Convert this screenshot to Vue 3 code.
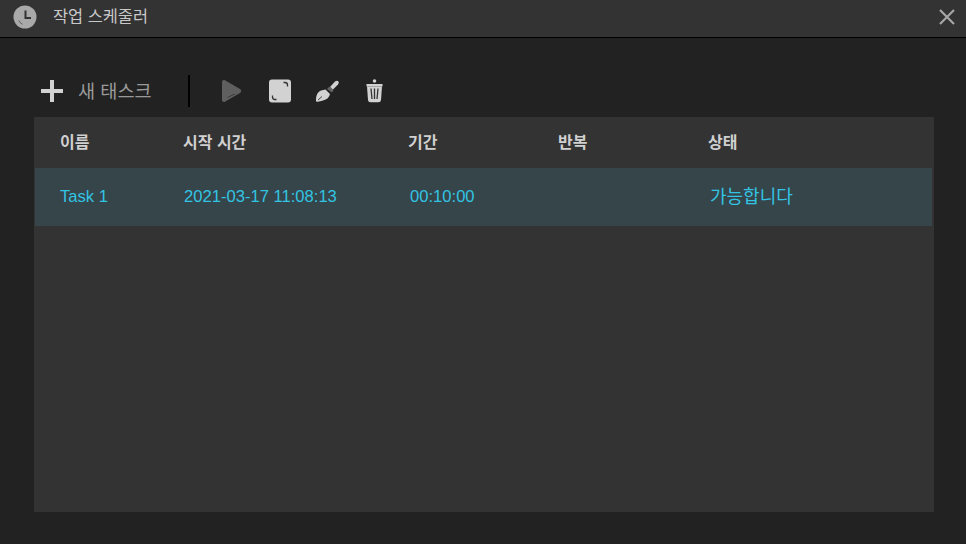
<template>
  <div class="window">
    <div class="title-bar">
      <svg class="app-icon" width="24" height="24" viewBox="0 0 24 24">
        <circle cx="12" cy="12" r="11.5" fill="#a9a9a9" />
        <path d="M12.5 5.5V13H18" fill="none" stroke="#333" stroke-width="2" />
        <path d="M6 15.5C6.6 17.2 7.6 18.3 9.5 19.2" fill="none" stroke="#555" stroke-width="1" />
      </svg>
      <span class="title">작업 스케줄러</span>
      <button class="close-btn">
        <svg width="16" height="16" viewBox="0 0 16 16">
          <path d="M1 1L15 15M15 1L1 15" stroke="#a6a6a6" stroke-width="2.2" />
        </svg>
      </button>
    </div>

    <div class="content">
      <div class="toolbar">
        <button class="add-btn">
          <svg width="24" height="24" viewBox="0 0 24 24">
            <path d="M12 1V23M1 12H23" stroke="#d2d2d2" stroke-width="4" />
          </svg>
          <span>새 태스크</span>
        </button>
        <div class="divider"></div>
        <div class="tools">
          <svg width="22" height="24" viewBox="1.5 0 22 24">
            <path d="M1.5 3Q1.5 0.5 4 1L19.5 10Q22 12 19.5 14L4 23Q1.5 23.5 1.5 21Z" fill="#5f5f5f" />
            <path d="M7 18.5L14 15" stroke="#3a3a3a" stroke-width="1" />
          </svg>
          <svg width="22" height="24" viewBox="0 0 22 24">
            <rect x="0" y="0.5" width="22" height="23" rx="3" fill="#d2d2d2" />
            <path d="M14.5 3.5H16Q18.5 3.5 18.5 6V7.5M3.5 16.5V18Q3.5 20.5 6 20.5H7.5" fill="none" stroke="#333" stroke-width="1.3" />
          </svg>
          <svg width="24" height="24" viewBox="1 0 24 24">
            <path d="M15 8L20 2.5Q22 1 23.3 2.2Q24.5 3.5 23 5.5L17.5 11Z" fill="#d2d2d2" />
            <path d="M13.5 8.5L15 7.5L18.5 11L17 13.5L12 10Z" fill="#666" />
            <path d="M1 22.5Q0.5 14 6 11.5L10.5 10.5L15 15Q14 20 8 21.5Q4 23 1 22.5Z" fill="#d2d2d2" />
            <path d="M3 21L7 17.5" stroke="#444" stroke-width="1" />
          </svg>
          <svg width="20" height="24" viewBox="0 0 20 24">
            <circle cx="9.5" cy="2" r="1.8" fill="#d2d2d2" />
            <path d="M1.5 5H17.5V7.5H1.5Z" fill="#d2d2d2" />
            <path d="M2 7.5H17L16 21Q15.8 23.2 13.5 23.2H5.5Q3.2 23.2 3 21Z" fill="#d2d2d2" />
            <path d="M6 9.5L7 20M9.5 9.5V20M13 9.5L12 20" stroke="#333" stroke-width="1.3" />
          </svg>
        </div>
      </div>

      <div class="table">
        <div class="row head">
          <span v-for="col in columns" :key="col">{{ col }}</span>
        </div>
        <div v-for="task in tasks" :key="task.name" class="row task">
          <span>{{ task.name }}</span>
          <span class="start">{{ task.start }}</span>
          <span class="duration">{{ task.duration }}</span>
          <span>{{ task.repeat }}</span>
          <span class="status">{{ task.status }}</span>
        </div>
      </div>
    </div>
  </div>
</template>

<script setup>
const columns = ['이름', '시작 시간', '기간', '반복', '상태']

const tasks = [
  { name: 'Task 1', start: '2021-03-17 11:08:13', duration: '00:10:00', repeat: '', status: '가능합니다' }
]
</script>

<style scoped>
.window {
  width: 966px;
  height: 544px;
  background: #222222;
  display: flex;
  flex-direction: column;
  font-family: "Liberation Sans", "Noto Sans CJK KR", sans-serif;
  overflow: hidden;
}

.title-bar {
  height: 38px;
  flex: none;
  display: flex;
  align-items: center;
  padding: 0 11px 3px 13px;
  box-sizing: border-box;
  background: #333333;
  border-bottom: 1px solid #000;
}

.title {
  margin-left: 16px;
  margin-bottom: 5px;
  font-size: 16.4px;
  color: #c8c8c8;
}

.close-btn {
  margin-left: auto;
  padding: 0;
  background: none;
  border: none;
  display: flex;
}

.content {
  flex: 1;
  display: flex;
  flex-direction: column;
  padding: 0 32px 32px 34px;
}

.toolbar {
  height: 79px;
  flex: none;
  display: flex;
  align-items: center;
  padding-top: 27px;
  box-sizing: border-box;
}

.add-btn {
  display: flex;
  align-items: center;
  gap: 14px;
  margin-left: 6px;
  padding: 0;
  background: none;
  border: none;
  font-family: inherit;
  font-size: 18.6px;
  color: #999999;
}

.add-btn span {
  margin-bottom: 3px;
}

.divider {
  width: 2px;
  height: 32px;
  margin-left: 36px;
  background: #000;
}

.tools {
  display: flex;
  align-items: center;
  gap: 25px;
  margin-left: 32px;
}

.table {
  flex: 1;
  background: #333333;
}

.row {
  display: grid;
  grid-template-columns: 123px 225px 150px 150px 1fr;
  align-items: center;
  padding-left: 26px;
}

.head {
  height: 51px;
  padding-bottom: 4px;
  box-sizing: border-box;
  font-size: 16px;
  font-weight: 700;
  color: #d0d0d0;
}

.task {
  height: 58px;
  margin: 0 2px 0 1px;
  padding-left: 25px;
  box-sizing: border-box;
  background: #354549;
  font-size: 16.6px;
  color: #33c3e3;
}

.start {
  padding-left: 1px;
}

.duration {
  padding-left: 2px;
}

.status {
  padding-left: 2px;
  margin-bottom: 5px;
  font-size: 18px;
}
</style>

<style>
html, body {
  margin: 0;
  background: #222222;
}
</style>
